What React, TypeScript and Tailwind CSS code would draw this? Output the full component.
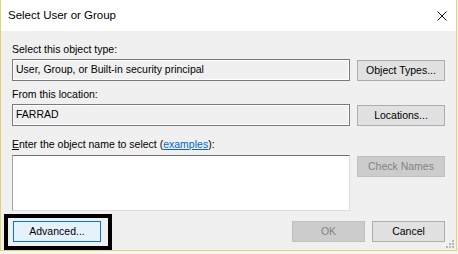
import React from "react";

const FONT = { fontFamily: '"Liberation Sans", Arial, sans-serif' };

function Btn({
  children,
  w = "w-[88px]",
  disabled = false,
  focused = false,
}: {
  children: React.ReactNode;
  w?: string;
  disabled?: boolean;
  focused?: boolean;
}) {
  const look = disabled
    ? "bg-[#cccccc] border-[#bfbfbf] text-[#838383]"
    : focused
      ? "bg-[#e5f1fb] border-[#0078d7] text-black"
      : "bg-[#e1e1e1] border-[#adadad] text-black";
  return (
    <button
      className={`${w} h-[21px] border flex items-center justify-center text-[10.5px] leading-none ${look}`}
    >
      {children}
    </button>
  );
}

function Label({ children }: { children: React.ReactNode }) {
  return <div className="h-[13px] text-[10.5px] leading-[13px] text-black">{children}</div>;
}

function ReadOnlyBox({ value }: { value: string }) {
  return (
    <div className="w-[338px] h-[22px] border border-[#7a7a7a] bg-[#f0f0f0] shadow-[inset_0_0_0_1px_#ffffff] flex items-center px-[3px] text-[10.5px] text-black">
      {value}
    </div>
  );
}

function Grip() {
  const dots = [
    [6, 0],
    [3, 3],
    [6, 3],
    [0, 6],
    [3, 6],
    [6, 6],
  ];
  return (
    <svg width="8" height="8" className="absolute right-[2px] bottom-[2px]">
      {dots.map(([x, y], i) => (
        <rect key={i} x={x} y={y} width="2" height="2" fill="#b9b9b9" />
      ))}
    </svg>
  );
}

export default function App() {
  return (
    <div className="w-[458px] h-[254px] bg-[#f4f4f4] relative overflow-hidden" style={FONT}>
      <div className="w-[457px] h-[251px] border-l border-r border-b border-[#e6d36b] flex flex-col relative">
        {/* Title bar */}
        <div className="h-[31px] bg-white flex items-center justify-between pl-[7px] pr-[9px]">
          <span className="text-[11.5px] text-black">Select User or Group</span>
          <svg width="10" height="10" viewBox="0 0 10 10">
            <path d="M0.5 0.5 L9.5 9.5 M9.5 0.5 L0.5 9.5" stroke="#111" strokeWidth="1" />
          </svg>
        </div>

        {/* Body */}
        <div className="flex-1 bg-[#f0f0f0] px-[11px] pt-[12px] relative">
          <Label>Select this object type:</Label>
          <div className="mt-[3px] flex gap-[7px]">
            <ReadOnlyBox value="User, Group, or Built-in security principal" />
            <div className="mt-[1px]">
              <Btn>Object Types...</Btn>
            </div>
          </div>

          <div className="mt-[7px]">
            <Label>From this location:</Label>
          </div>
          <div className="mt-[3px] flex gap-[7px]">
            <ReadOnlyBox value="FARRAD" />
            <div className="mt-[1px]">
              <Btn>Locations...</Btn>
            </div>
          </div>

          <div className="mt-[12px]">
            <Label>
              <span className="underline">E</span>nter the object name to select (
              <span className="text-[#0066cc] underline">examples</span>):
            </Label>
          </div>
          <div className="mt-[4px] flex gap-[7px]">
            <div className="w-[338px] h-[56px] bg-white border-t border-l border-t-[#6e6e6e] border-l-[#a5a5a5] border-r border-b border-r-[#dcdcdc] border-b-[#dcdcdc]" />
            <div className="mt-[1px]">
              <Btn disabled>Check Names</Btn>
            </div>
          </div>

          <div className="mt-[10px] flex items-center">
            <div className="ml-[1px]">
              <Btn focused>Advanced...</Btn>
            </div>
            <div className="ml-auto flex gap-[7px]">
              <Btn w="w-[73px]" disabled>
                OK
              </Btn>
              <Btn w="w-[73px]">Cancel</Btn>
            </div>
          </div>
          <Grip />
        </div>
      </div>

      {/* annotation outline around Advanced */}
      <div className="absolute left-[4px] top-[214px] w-[108px] h-[36px] border-[4px] border-black" />
    </div>
  );
}
